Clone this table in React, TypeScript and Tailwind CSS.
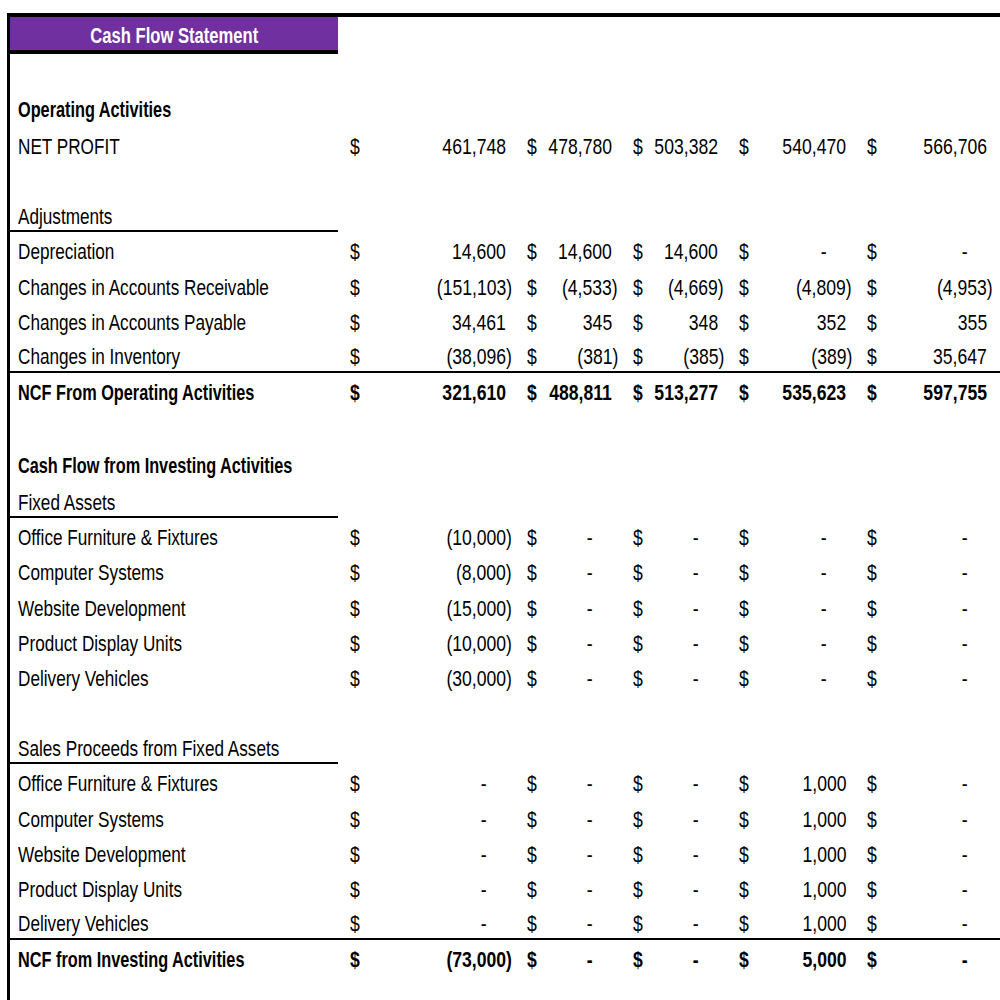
type Row =
  | { kind: 'blank'; h: string }
  | { kind: 'title'; label: string; bold?: boolean; underline?: boolean }
  | { kind: 'data'; label: string; values: string[]; bold?: boolean; rule?: boolean };

const dash = ['-', '-', '-', '-'];

const rows: Row[] = [
  { kind: 'blank', h: 'h-[37px]' },
  { kind: 'title', label: 'Operating Activities', bold: true },
  { kind: 'data', label: 'NET PROFIT', values: ['461,748', '478,780', '503,382', '540,470', '566,706'] },
  { kind: 'blank', h: 'h-[35.2px]' },
  { kind: 'title', label: 'Adjustments', underline: true },
  { kind: 'data', label: 'Depreciation', values: ['14,600', '14,600', '14,600', '-', '-'] },
  { kind: 'data', label: 'Changes in Accounts Receivable', values: ['(151,103)', '(4,533)', '(4,669)', '(4,809)', '(4,953)'] },
  { kind: 'data', label: 'Changes in Accounts Payable', values: ['34,461', '345', '348', '352', '355'] },
  { kind: 'data', label: 'Changes in Inventory', values: ['(38,096)', '(381)', '(385)', '(389)', '35,647'], rule: true },
  { kind: 'data', label: 'NCF From Operating Activities', values: ['321,610', '488,811', '513,277', '535,623', '597,755'], bold: true },
  { kind: 'blank', h: 'h-[39.5px]' },
  { kind: 'title', label: 'Cash Flow from Investing Activities', bold: true },
  { kind: 'title', label: 'Fixed Assets', underline: true },
  { kind: 'data', label: 'Office Furniture & Fixtures', values: ['(10,000)', ...dash] },
  { kind: 'data', label: 'Computer Systems', values: ['(8,000)', ...dash] },
  { kind: 'data', label: 'Website Development', values: ['(15,000)', ...dash] },
  { kind: 'data', label: 'Product Display Units', values: ['(10,000)', ...dash] },
  { kind: 'data', label: 'Delivery Vehicles', values: ['(30,000)', ...dash] },
  { kind: 'blank', h: 'h-[35.2px]' },
  { kind: 'title', label: 'Sales Proceeds from Fixed Assets', underline: true },
  { kind: 'data', label: 'Office Furniture & Fixtures', values: ['-', '-', '-', '1,000', '-'] },
  { kind: 'data', label: 'Computer Systems', values: ['-', '-', '-', '1,000', '-'] },
  { kind: 'data', label: 'Website Development', values: ['-', '-', '-', '1,000', '-'] },
  { kind: 'data', label: 'Product Display Units', values: ['-', '-', '-', '1,000', '-'] },
  { kind: 'data', label: 'Delivery Vehicles', values: ['-', '-', '-', '1,000', '-'], rule: true },
  { kind: 'data', label: 'NCF from Investing Activities', values: ['(73,000)', '-', '-', '5,000', '-'], bold: true },
];

const grid = 'grid grid-cols-[328px_177px_106px_106px_128px_141px_1fr]';
const base = 'inline-block whitespace-nowrap';

function Label({ text, bold }: { text: string; bold?: boolean }) {
  return (
    <span className={`${base} origin-left ${bold ? 'scale-x-[0.74] font-bold' : 'scale-x-[0.78]'}`}>{text}</span>
  );
}

function Amount({ value, bold }: { value: string; bold?: boolean }) {
  // accounting format: "_)" pad on positives, "-??" pad on zero
  const pad = value === '-' ? '00)' : value.startsWith('(') ? '' : ')';
  return (
    <div className="flex justify-between pl-3 pr-[3px]">
      <span className={`w-0 ${base} origin-left scale-x-[0.8] ${bold ? 'font-bold' : ''}`}>$</span>
      <span className={`${base} origin-right scale-x-[0.8] ${bold ? 'font-bold' : ''}`}>
        {value}
        <span className="invisible">{pad}</span>
      </span>
    </div>
  );
}

export default function App() {
  return (
    <div className="h-screen w-[1000px] overflow-hidden bg-white font-['Liberation_Sans',Arial,sans-serif] text-[22px] leading-none text-black">
      <div className="ml-[7px] mt-[13px] h-[987px] border-l-[3px] border-t-4 border-black">
        <div className="flex h-[37px] w-[328px] items-center justify-center border-b-4 border-black bg-[#7030a0] pt-[5px]">
          <span className={`${base} scale-x-[0.755] font-bold text-white`}>Cash Flow Statement</span>
        </div>

        {rows.map((r, i) => {
          if (r.kind === 'blank') return <div key={i} className={r.h} />;
          if (r.kind === 'title') {
            return (
              <div key={i} className={`${grid} h-[35.2px]`}>
                <div className={`flex items-center pl-2 ${r.underline ? 'border-b-2 border-black pt-[8px]' : 'pt-[2px]'}`}>
                  <Label text={r.label} bold={r.bold} />
                </div>
              </div>
            );
          }
          return (
            <div key={i} className={`${grid} h-[35.2px] items-center pt-[6px] ${r.rule ? 'border-b-2 border-black' : ''}`}>
              <div className="pl-2">
                <Label text={r.label} bold={r.bold} />
              </div>
              {r.values.map((v, j) => (
                <Amount key={j} value={v} bold={r.bold} />
              ))}
              <div />
            </div>
          );
        })}
      </div>
    </div>
  );
}
